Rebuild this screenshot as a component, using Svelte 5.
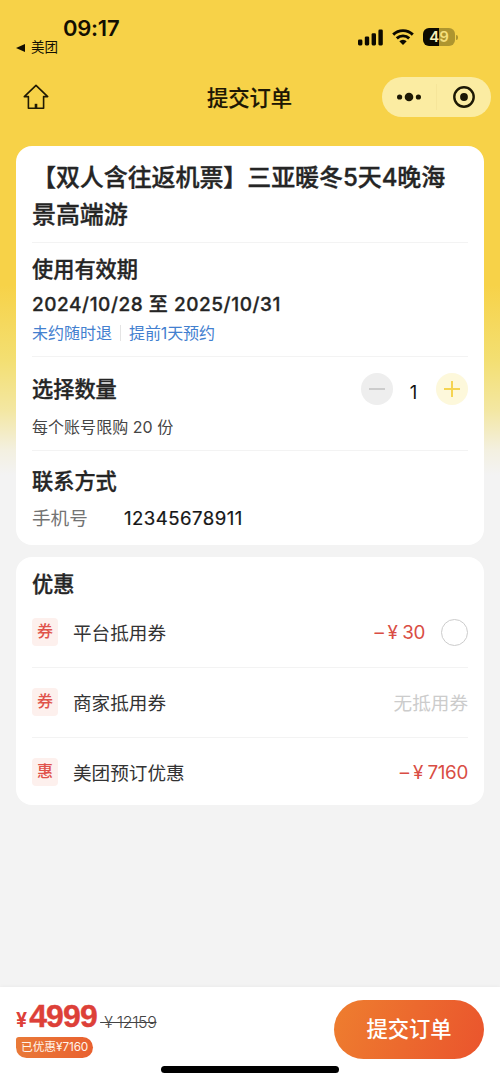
<script>
  const discounts = [
    { tag: '券', name: '平台抵用券', amount: '30', selectable: true },
    { tag: '券', name: '商家抵用券', empty: '无抵用券' },
    { tag: '惠', name: '美团预订优惠', amount: '7160' }
  ];
  let quantity = $state(1);
  let chosen = $state(false);
</script>

<div class="screen">
  <header class="status">
    <div class="clock">
      <span class="time">09:17</span>
      <span class="back">
        <svg width="9" height="8" viewBox="0 0 9 8"><path d="M0 4 9 0v8z" fill="#120e02" /></svg>
        美团
      </span>
    </div>
    <div class="signals">
      <svg width="25" height="17" viewBox="0 0 25 17" fill="#0d0a00">
        <rect x="0" y="10.6" width="4.4" height="5.8" rx="1.3" />
        <rect x="6.8" y="7.4" width="4.4" height="9" rx="1.3" />
        <rect x="13.6" y="4.2" width="4.4" height="12.2" rx="1.3" />
        <rect x="20.4" y="0.6" width="4.4" height="15.8" rx="1.3" />
      </svg>
      <svg class="wifi" width="22" height="16" viewBox="0 0 22 16" fill="none" stroke="#0d0a00" stroke-width="2.9">
        <path d="M1.2 5.6a14 14 0 0 1 19.6 0" />
        <path d="M4.8 9.4a8.8 8.8 0 0 1 12.4 0" />
        <path d="M7.3 12.2a5.3 5.3 0 0 1 7.4 0L11 15.9z" fill="#0d0a00" stroke="none" />
      </svg>
      <div class="battery"><span class="cell"><b>4</b><i>9</i></span><span class="tip"></span></div>
    </div>
  </header>

  <nav class="nav">
    <button class="home" aria-label="首页">
      <svg width="26" height="26" viewBox="0 0 26 26" fill="none" stroke="#211a04" stroke-width="1.6" stroke-linejoin="round" stroke-linecap="round">
        <path d="M13 1.4 1.3 12.6h4.1v11.6h15.2V12.6h4.1z" />
        <path d="M13 19.8v4.4" stroke-width="2.6" stroke-linecap="butt" />
      </svg>
    </button>
    <h1>提交订单</h1>
    <div class="capsule">
      <svg width="24" height="10" viewBox="0 0 24 10" fill="#1c1804"><circle cx="2.6" cy="5" r="2.6" /><circle cx="12" cy="5" r="4.3" /><circle cx="21.4" cy="5" r="2.6" /></svg>
      <span class="split"></span>
      <svg width="22" height="22" viewBox="0 0 22 22"><circle cx="11" cy="11" r="9.7" fill="none" stroke="#1c1804" stroke-width="2.4" /><circle cx="11" cy="11" r="3.9" fill="#1c1804" /></svg>
    </div>
  </nav>

  <main>
    <section class="card order">
      <div class="block product">【双人含往返机票】三亚暖冬5天4晚海景高端游</div>
      <div class="block validity">
        <h2>使用有效期</h2>
        <p class="dates">2024/10/28 至 2025/10/31</p>
        <p class="rules"><span>未约随时退</span><span>提前1天预约</span></p>
      </div>
      <div class="block amount">
        <div class="picker">
          <h2>选择数量</h2>
          <div class="stepper">
            <button class="minus" aria-label="减少" onclick={() => (quantity = Math.max(1, quantity - 1))}></button>
            <span class="count">{quantity}</span>
            <button class="plus" aria-label="增加" onclick={() => (quantity = Math.min(20, quantity + 1))}></button>
          </div>
        </div>
        <p class="limit">每个账号限购 20 份</p>
      </div>
      <div class="block contact">
        <h2>联系方式</h2>
        <p class="phone"><span class="label">手机号</span><span class="number">12345678911</span></p>
      </div>
    </section>

    <section class="card offers">
      <h2>优惠</h2>
      {#each discounts as item}
        <div class="row">
          <span class="tag">{item.tag}</span>
          <span class="name">{item.name}</span>
          {#if item.empty}
            <span class="empty">{item.empty}</span>
          {:else}
            <span class="minus-price"><span class="dash">–</span><span class="yen">¥</span>{item.amount}</span>
          {/if}
          {#if item.selectable}
            <button class="radio" class:chosen aria-label="选择" onclick={() => (chosen = !chosen)}></button>
          {/if}
        </div>
      {/each}
    </section>
  </main>

  <footer>
    <div class="pay">
      <div class="total">
        <div class="prices"><span class="cur">¥</span><span class="now">4999</span><s>&nbsp;¥ 12159</s></div>
        <span class="saved">已优惠¥7160</span>
      </div>
      <button class="submit">提交订单</button>
    </div>
    <div class="indicator"></div>
  </footer>
</div>

<style>
  :global(body) { margin: 0; }
  .screen, .screen * { box-sizing: border-box; }
  .screen {
    width: 500px;
    height: 1083px;
    overflow: hidden;
    display: flex;
    flex-direction: column;
    font-family: Inter, "Noto Sans CJK SC", sans-serif;
    color: #252525;
    background: linear-gradient(180deg, #f7d248 0, #f7d248 285px, #f3df72 360px, #f3e7a2 410px, #f3f0e0 450px, #f3f3f3 475px);
  }
  h1, h2, p { margin: 0; }
  h2 { font-size: 21.2px; line-height: 30px; font-weight: 500; white-space: nowrap; -webkit-text-stroke: 0.35px currentColor; }
  button { border: 0; padding: 0; background: none; font: inherit; }
  svg { display: block; flex: none; }

  .status { height: 70px; display: flex; justify-content: space-between; padding: 15px 42px 0 16px; }
  .clock { display: flex; flex-direction: column; }
  .time { font-size: 22px; line-height: 26px; font-weight: 600; color: #130f02; margin-left: 47px; letter-spacing: -0.25px; }
  .back { display: flex; align-items: center; gap: 6px; font-size: 13.5px; line-height: 14px; margin-top: -1px; color: #130f02; white-space: nowrap; }
  .back svg { margin-top: 1px; }
  .signals { display: flex; align-items: center; height: 20px; margin-top: 12px; }
  .wifi { margin-left: 9px; }
  .battery { display: flex; align-items: center; margin-left: 9px; gap: 1px; }
  .cell { width: 32px; height: 18px; border-radius: 6px; background: linear-gradient(90deg, #0d0a00 50%, #ae952f 50%); display: flex; justify-content: center; align-items: center; color: #f5df7c; font-size: 15px; line-height: 18px; font-weight: 600; }
  .cell i { font-style: normal; }
  .cell b { font-weight: 600; color: #faf0b8; }
  .tip { width: 2px; height: 5px; border-radius: 0 2px 2px 0; background: #ae952f; }

  .nav { height: 54px; display: grid; grid-template-columns: 118px 1fr 118px; align-items: center; padding: 0 9px; }
  .home { width: 26px; margin-left: 14px; }
  h1 { font-size: 21.3px; line-height: 30px; font-weight: 500; text-align: center; color: #1d1704; padding: 1px 1px 0 0; -webkit-text-stroke: 0.2px currentColor; }
  .capsule { width: 109px; height: 40px; margin-left: 9px; border-radius: 20px; background: #fbeca2; display: flex; align-items: center; padding: 0 16px 0 15px; }
  .split { width: 1px; height: 26px; background: #f6e59a; margin: 0 16px 0 15px; }

  main { flex: 1; padding: 22px 16px 0; display: flex; flex-direction: column; gap: 12px; }
  .card { background: #fff; border-radius: 16px; padding: 0 16px; flex: none; }
  .order { height: 399px; }
  .block + .block { border-top: 1px solid #f3f3f3; }
  .product { height: 96px; padding-top: 13px; font-size: 24px; letter-spacing: -0.08px; line-height: 37px; font-weight: 500; -webkit-text-stroke: 0.35px currentColor; }
  .validity { height: 114px; padding-top: 11px; }
  .dates { font-size: 19px; line-height: 28px; font-weight: 500; letter-spacing: 0.55px; margin-top: 7px; white-space: nowrap; -webkit-text-stroke: 0.3px currentColor; }
  .rules { display: flex; font-size: 16px; line-height: 24px; color: #4380cf; margin-top: 2px; white-space: nowrap; }
  .rules span + span { margin-left: 8px; padding-left: 9px; position: relative; letter-spacing: -0.1px; }
  .rules span + span::before { content: ''; position: absolute; left: 0; top: 4px; width: 1px; height: 16px; background: #e4e4e4; }
  .amount { height: 94px; padding-top: 16px; }
  .picker { display: flex; justify-content: space-between; align-items: center; height: 32px; }
  .stepper { display: flex; align-items: center; }
  .stepper button { width: 32px; height: 32px; border-radius: 50%; }
  .minus { background: linear-gradient(#ccc, #ccc) center / 16px 2px no-repeat, #eee; }
  .plus { background: linear-gradient(#f5d451, #f5d451) center / 16px 2px no-repeat, linear-gradient(#f5d451, #f5d451) center / 2px 16px no-repeat, #fdf8db; }
  .count { width: 43px; text-align: center; font-size: 18.5px; line-height: 24px; color: #111; padding: 5px 2px 0 0; }
  .limit { font-size: 16px; line-height: 24px; margin-top: 10px; color: #454545; letter-spacing: 0.04px; }
  .contact { padding-top: 15px; }
  .phone { display: flex; align-items: center; font-size: 18.6px; line-height: 28px; margin-top: 8px; white-space: nowrap; }
  .label { width: 92px; color: #737373; }
  .number { color: #161616; letter-spacing: 0.46px; -webkit-text-stroke: 0.2px currentColor; }

  .offers { height: 248px; padding-top: 12px; }
  .offers h2 { height: 28px; }
  .row { height: 70px; display: flex; align-items: center; border-top: 1px solid transparent; }
  .row + .row { border-top-color: #f3f3f3; }
  .tag { width: 26px; height: 28px; margin-top: -1px; border-radius: 4px; background: #fdf0ed; color: #e0524a; font-size: 16px; line-height: 27px; font-weight: 500; text-align: center; }
  .name { font-size: 18.6px; line-height: 28px; margin-left: 15px; margin-right: auto; color: #333; }
  .empty { font-size: 18.6px; line-height: 28px; color: #ccc; }
  .minus-price { font-size: 18.8px; line-height: 28px; color: #d94d44; letter-spacing: -0.3px; padding-top: 1px; }
  .yen { margin: 0 4.5px 0 4px; }
  .radio { width: 27px; height: 27px; border: 1.5px solid #ccc; border-radius: 50%; margin-left: 16px; }
  .radio.chosen { background: #e0524a; }

  footer { height: 96px; background: #fff; flex: none; box-shadow: 0 -1px 3px rgba(0, 0, 0, 0.03); }
  .pay { height: 79px; display: flex; justify-content: space-between; padding: 13px 16px 0; }
  .total { display: flex; flex-direction: column; align-items: flex-start; }
  .prices { display: flex; align-items: baseline; height: 36px; line-height: 32px; color: #dd4038; white-space: nowrap; }
  .cur { font-size: 19.5px; font-weight: 700; }
  .now { font-family: "Liberation Sans", sans-serif; font-size: 32px; font-weight: 700; margin-left: 2px; letter-spacing: -0.8px; -webkit-text-stroke: 0.4px currentColor; }
  s { font-size: 16px; font-weight: 300; letter-spacing: -0.35px; color: #444; margin-left: 3px; position: relative; top: 1px; }
  .saved { height: 21px; border-radius: 3px 11px 11px 11px; background: linear-gradient(100deg, #e97a38, #e9602f); color: #fff4ea; font-size: 11.8px; font-weight: 400; line-height: 21px; padding: 0 5px; margin-top: 1px; letter-spacing: -0.12px; white-space: nowrap; }
  .submit { width: 150px; height: 59px; border-radius: 30px; background: linear-gradient(110deg, #ee7e2f, #ea542d); color: #fff; font-size: 21.3px; font-weight: 500; line-height: 57px; }
  .indicator { width: 178px; height: 7px; border-radius: 4px; background: #000; margin-left: 161px; }
</style>
